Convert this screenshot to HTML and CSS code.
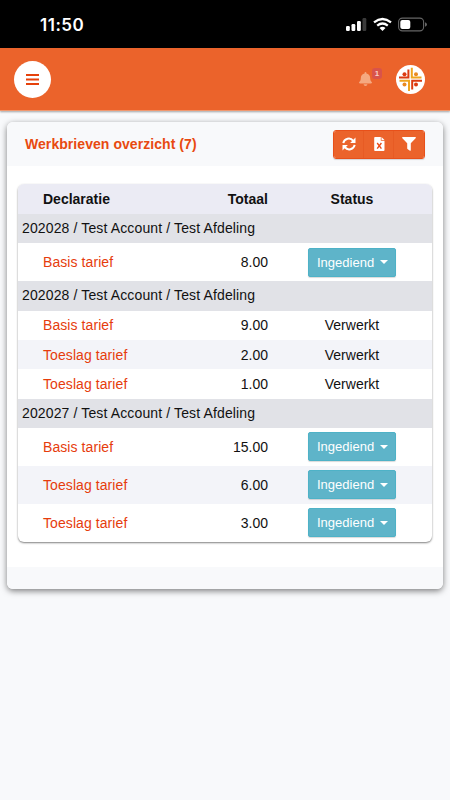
FILE: index.html
```html
<!DOCTYPE html>
<html lang="nl">
<head>
  <meta charset="UTF-8" />
  <meta name="viewport" content="width=device-width, initial-scale=1.0" />
  <title>Werkbrieven overzicht</title>
  <link rel="stylesheet" href="styles.css">
</head>
<body>

  <div class="statusbar">
    <span class="time">11:50</span>
    <svg width="82" height="18" viewBox="0 0 82 18" fill="#fff">
      <rect x="1" y="12" width="3.8" height="5" rx="1.2" />
      <rect x="6.5" y="10" width="3.8" height="7" rx="1.2" />
      <rect x="12" y="7" width="3.8" height="10" rx="1.2" />
      <rect x="17.5" y="4" width="3.8" height="13" rx="1.2" fill="#3a3a3a" />
      <g fill="none" stroke="#fff" stroke-width="2.3">
        <path d="M29 8.3 Q37.5 1.6 46 8.3" />
        <path d="M32.2 11.7 Q37.5 7.4 42.8 11.7" />
      </g>
      <path d="M34.5 13.9 Q37.5 11.8 40.5 13.9 L37.5 17Z" />
      <rect x="53.6" y="4.1" width="25" height="12.8" rx="3.8" fill="none" stroke="#666" stroke-width="1.1" />
      <rect x="55.3" y="6" width="10" height="9" rx="2" />
      <path d="M80 8.2 Q82 9 82 10.5 Q82 12 80 12.8Z" fill="#666" />
    </svg>
  </div>

  <header>
    <button class="menu-btn" aria-label="Menu">
      <svg width="13" height="11" viewBox="0 0 13 11" fill="#e6410b">
        <rect width="13" height="2" /><rect y="4.5" width="13" height="2" /><rect y="9" width="13" height="2" />
      </svg>
    </button>
    <div class="bell">
      <svg width="13" height="14" viewBox="0 0 448 512" preserveAspectRatio="none" fill="#f5a880">
        <path d="M224 512c35 0 64-29 64-64H160c0 35 29 64 64 64zm215-150c-19-21-55-52-55-154 0-78-54-140-128-155V32a32 32 0 0 0-64 0v21C118 68 64 130 64 208c0 102-36 133-55 154-6 6-9 14-9 22 0 16 13 32 32 32h384c19 0 32-16 32-32 0-8-3-16-9-22z" />
      </svg>
      <span class="badge">1</span>
    </div>
    <div class="avatar">
      <svg width="29" height="29" viewBox="0 0 29 29">
        <g fill="none" stroke-width="2">
          <path d="M12.4 4.5V12.4H3" stroke="#dc3b12" />
          <path d="M15.8 2.8V12.4H25.5" stroke="#efa51f" />
          <path d="M3.5 15.7H13V26" stroke="#efa51f" />
          <path d="M26 15.7H16.2V24.5" stroke="#dc3b12" />
        </g>
        <g fill="#dc3b12"><circle cx="8.5" cy="9.2" r="2" /><circle cx="20" cy="19.6" r="2" /></g>
        <g fill="#e98a22"><circle cx="20" cy="9.2" r="2" /><circle cx="8.5" cy="19.6" r="2" /></g>
      </svg>
    </div>
  </header>

  <main class="card">
    <div class="card-header">
      <h1>Werkbrieven overzicht (7)</h1>
      <div class="btn-group">
        <button aria-label="Vernieuwen">
          <svg width="14" height="14" viewBox="0 0 14 14">
            <g fill="none" stroke="#fff" stroke-width="2">
              <path d="M1.3 6.1A5.6 5.6 0 0 1 11.2 3.8" />
              <path d="M12.7 7.9A5.6 5.6 0 0 1 2.8 10.2" />
            </g>
            <path d="M13.5.6V6H8.1ZM.5 13.4V8h5.4Z" fill="#fff" />
          </svg>
        </button>
        <button aria-label="Excel">
          <svg width="11" height="14" viewBox="0 0 11 14">
            <path d="M1 0H6.8V3.7H10.5V13Q10.5 14 9.5 14H1Q.2 14 .2 13V1Q.2 0 1 0ZM7.5 0L10.5 3H7.5Z" fill="#fff" />
            <path d="M3.2 6L7.4 11.6M7.4 6L3.2 11.6" fill="none" stroke="#ea4a17" stroke-width="1.4" />
          </svg>
        </button>
        <button aria-label="Filter">
          <svg width="14" height="14" viewBox="0 0 14 14" fill="#fff">
            <path d="M.7 0H13.3Q14.3.5 13.6 1.3L8.8 6.2V13.2Q8.6 14 7.9 13.7L5.5 12Q5.2 11.7 5.2 11.3V6.2L.4 1.3Q-.3.5.7 0Z" />
          </svg>
        </button>
      </div>
    </div>

    <div class="card-body">
      <div class="table">
        <div class="row head"><span>Declaratie</span><span>Totaal</span><span>Status</span></div>

        <div class="group">202028 / Test Account / Test Afdeling</div>
        <div class="row tall"><a>Basis tarief</a><span>8.00</span><span><button class="status-btn">Ingediend</button></span></div>

        <div class="group">202028 / Test Account / Test Afdeling</div>
        <div class="row"><a>Basis tarief</a><span>9.00</span><span>Verwerkt</span></div>
        <div class="row even"><a>Toeslag tarief</a><span>2.00</span><span>Verwerkt</span></div>
        <div class="row"><a>Toeslag tarief</a><span>1.00</span><span>Verwerkt</span></div>

        <div class="group">202027 / Test Account / Test Afdeling</div>
        <div class="row tall"><a>Basis tarief</a><span>15.00</span><span><button class="status-btn">Ingediend</button></span></div>
        <div class="row tall even"><a>Toeslag tarief</a><span>6.00</span><span><button class="status-btn">Ingediend</button></span></div>
        <div class="row tall"><a>Toeslag tarief</a><span>3.00</span><span><button class="status-btn">Ingediend</button></span></div>
      </div>
    </div>

    <div class="card-footer"></div>
  </main>

</body>
</html>
```
FILE: styles.css
```css
* {
  margin: 0;
  padding: 0;
  box-sizing: border-box;
}

body {
  background: #f8f9fb;
  color: #111;
  font-family: "Liberation Sans", Arial, sans-serif;
  font-size: 14px;
  min-height: 100vh;
}

button {
  border: none;
  font-family: inherit;
  cursor: pointer;
}

svg {
  display: block;
}

/* Status bar */
.statusbar {
  background: #000;
  color: #fff;
  height: 48px;
  padding: 0 23px 0 40px;
  display: flex;
  justify-content: space-between;
  align-items: center;
}

.statusbar svg {
  margin-top: -2px;
}

.time {
  font-family: Inter, sans-serif;
  font-size: 17px;
  font-weight: 600;
  letter-spacing: 0.5px;
  margin-top: 1px;
}

header {
  background: #eb632b;
  height: 63px;
  padding: 0 25px 0 14px;
  display: flex;
  align-items: center;
  border-bottom: 1px solid #f2986f;
  box-shadow: 0 1px 2px rgba(0, 0, 0, 0.35);
}

.menu-btn {
  width: 37px;
  height: 37px;
  border-radius: 50%;
  background: #fff;
  display: flex;
  align-items: center;
  justify-content: center;
}

.bell {
  position: relative;
  margin-left: auto;
  margin-right: 24px;
}

.badge {
  position: absolute;
  top: -4px;
  left: 13px;
  width: 10px;
  height: 11px;
  border-radius: 3px;
  background: #d9534a;
  color: #f8d0c6;
  font-size: 8px;
  font-weight: bold;
  line-height: 11px;
  text-align: center;
}

.avatar {
  width: 29px;
  height: 29px;
  border-radius: 50%;
  background: #fff;
}

/* Card */
.card {
  margin: 11px 7px 0;
  background: #fff;
  border-radius: 6px;
  box-shadow: 0 2px 6px rgba(0, 0, 0, 0.5);
  overflow: hidden;
}

.card-header {
  background: #f8f9fb;
  height: 44px;
  padding: 0 18px;
  display: flex;
  justify-content: space-between;
  align-items: center;
}

.card-header h1 {
  color: #e84a10;
  font-size: 14px;
  letter-spacing: 0.06px;
}

.btn-group {
  display: flex;
  border: 1px solid #e8501a;
  border-radius: 3px;
  overflow: hidden;
  box-shadow: 0 1px 1px rgba(0, 0, 0, 0.15);
}

.btn-group button {
  width: 30px;
  height: 27px;
  background: #eb632b;
  display: flex;
  align-items: center;
  justify-content: center;
}

.btn-group button + button {
  box-shadow: -1px 0 #e75b24;
}

.card-body {
  padding: 18px 11px 25px 11px;
}

.card-footer {
  height: 22px;
  background: #f8f9fb;
}

/* Table */
.table {
  border-radius: 6px;
  overflow: hidden;
  box-shadow: 0 1px 2px rgba(0, 0, 0, 0.5);
}

.row {
  display: grid;
  grid-template-columns: 155px 95px 1fr;
  align-items: center;
  height: 29.33px;
  padding-left: 25px;
}

.row > :nth-child(2) {
  text-align: right;
  padding-right: 25px;
  white-space: nowrap;
}

.row > :nth-child(3) {
  display: flex;
  justify-content: center;
  margin-right: 21px;
}

.row.head {
  height: 30px;
  background: #ebebf4;
  font-weight: bold;
}

.row.tall {
  height: 38px;
}

.row.even {
  background: #f3f4f9;
}

.row a {
  color: #e63c0c;
  letter-spacing: 0.08px;
}

.group {
  height: 29.33px;
  line-height: 29px;
  padding-left: 4px;
  background: #e1e2e7;
  letter-spacing: 0.13px;
}

.status-btn {
  display: flex;
  align-items: center;
  gap: 8px;
  width: 88px;
  height: 29px;
  padding: 0 8px;
  border: 1px solid #4eb2c7;
  border-radius: 2px;
  background: #5eb4c9;
  color: #fff;
  font-size: 13px;
  box-shadow: 0 1px 1px rgba(0, 0, 0, 0.15);
}

.status-btn::after {
  content: "";
  margin-left: -2px;
  border: 4px solid transparent;
  border-top-color: #fff;
  border-bottom: 0;
}
```
